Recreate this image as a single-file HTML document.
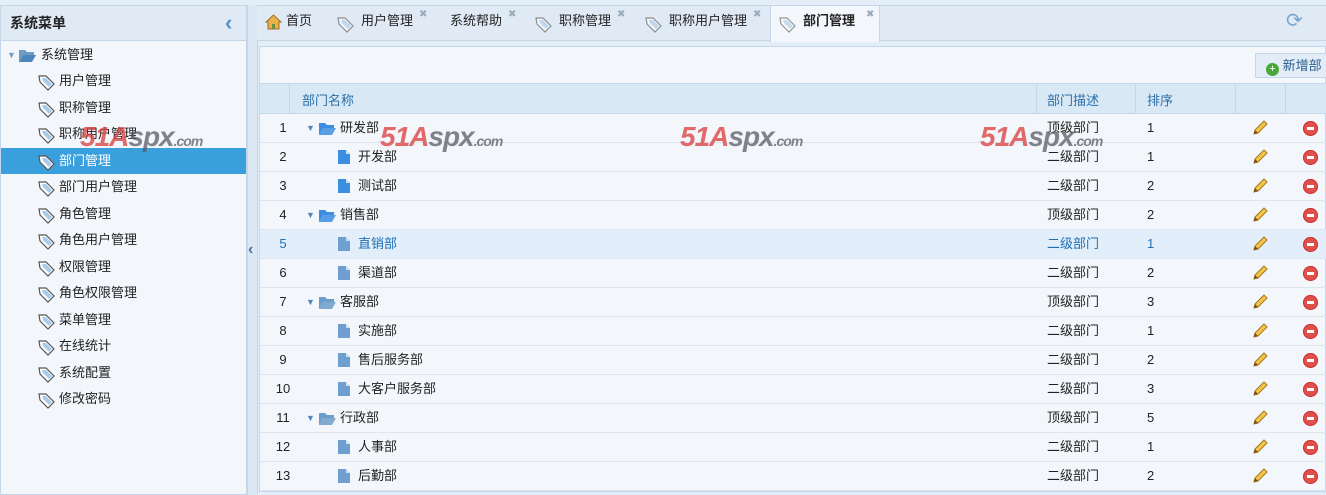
<!DOCTYPE html>
<html><head><meta charset="utf-8"><style>
*{margin:0;padding:0;box-sizing:border-box}
body{width:1326px;height:495px;overflow:hidden;background:#e4eef8;font-family:"Liberation Sans","Noto Sans CJK SC",sans-serif;font-size:13px;color:#222;position:relative}
.abs{position:absolute}
#left{left:0;top:5px;width:247px;height:490px;background:#f3f6fa;border:1px solid #c5d6e8}
#lh{height:35px;background:#dfeaf5;border-bottom:1px solid #c5d6e8;font-weight:bold;font-size:14px;padding:7px 9px}
.mi{position:absolute;left:0;width:245px;height:26px;line-height:26px;padding-left:58px}
.mi.sel{background:#3aa0dd;color:#fff}
.tag{position:absolute;left:37px;top:6px}
#split{left:247px;top:5px;width:11px;height:490px;background:#dbe7f3;border-left:1px solid #c5d6e8;border-right:1px solid #c5d6e8}
#tabs{left:257px;top:5px;width:1069px;height:36px;background:#dfeaf5;border-top:1px solid #c5d6e8;border-bottom:1px solid #c5d6e8}
.tab{position:absolute;top:0;height:35px;line-height:30px;font-size:13px}
.x{position:absolute;top:-6px;font-size:10px;color:#9ab}
#tact{background:#f3f6fa;border-left:1px solid #c5d6e8;border-right:1px solid #c5d6e8;height:36px;font-weight:bold}
#content{left:259px;top:46px;width:1067px;height:446px;background:#f3f6fa;border:1px solid #c5d6e8}
#gh{left:260px;top:83px;width:1066px;height:31px;background:#d9e8f5;border-top:1px solid #c5d6e8;border-bottom:1px solid #c5d6e8;color:#2a6fa8}
.row{position:absolute;left:260px;width:1066px;height:29px;border-bottom:1px solid #dde5ee;line-height:28px}
.row.hl{background:#e2eef9;color:#1f6fb5}
.c{position:absolute;top:0}
.wm{position:absolute;font:italic bold 28px "Liberation Sans",sans-serif;color:rgba(220,70,70,.8);letter-spacing:-1px}
.wm span{color:rgba(90,90,100,.75)}
.wm small{font-size:14px;color:rgba(90,90,100,.75)}
</style></head><body>
<div id="left" class="abs">
<div id="lh">系统菜单<span style="position:absolute;left:224px;top:4px;color:#5b8fc7;font-size:22px;font-weight:bold">&lsaquo;</span></div>
<div class="mi" style="top:36px;padding-left:40px"><span style="position:absolute;left:6px;color:#7a9fc4;font-size:9px">▼</span><svg style="position:absolute;left:18px;top:7px" width="17" height="13"><path d="M0 1h6l2 2h7v3H4L0 13z" fill="#6c9cc8"/><path d="M4 6h13l-4 7H0z" fill="#4b86bd"/></svg>系统管理</div>
<div id="mitems"></div>
</div>
<div id="split" class="abs"><span style="position:absolute;left:0;top:236px;color:#4a6f99;font-weight:bold;font-size:16px">&lsaquo;</span></div>
<div id="tabs" class="abs">
<div class="tab" style="left:8px"><svg style="position:absolute;top:8px" width="17" height="16"><path d="M8.5 1L1 8h2v7h11V8h2z" fill="#e7b24a" stroke="#a56a1f"/><rect x="7" y="10" width="3" height="5" fill="#6b8f3a"/></svg><span style="padding-left:21px">首页</span></div>
<div class="tab" style="left:80px"><span style="padding-left:24px">用户管理</span><span class="x" style="left:82px">✖</span></div>
<div class="tab" style="left:193px">系统帮助<span class="x" style="left:58px">✖</span></div>
<div class="tab" style="left:278px"><span style="padding-left:24px">职称管理</span><span class="x" style="left:82px">✖</span></div>
<div class="tab" style="left:388px"><span style="padding-left:24px">职称用户管理</span><span class="x" style="left:108px">✖</span></div>
<div class="tab" id="tact" style="left:513px;width:110px;padding-left:32px">部门管理<span class="x" style="left:95px;font-weight:normal">✖</span></div>
<span style="position:absolute;left:1026px;top:2px;color:#7aa7cf;font-size:20px">⟳</span>
</div>
<div id="content" class="abs">
<div style="position:absolute;left:995px;top:6px;width:75px;height:25px;border:1px solid #c5d6e8;background:#e3edf7;line-height:23px;padding-left:10px;color:#2a5f8f"><span style="display:inline-block;width:13px;height:13px;border-radius:50%;background:#4aa83a;color:#fff;font-size:11px;line-height:13px;text-align:center;vertical-align:-2px">+</span> 新增部</div>
</div>
<div id="gh" class="abs">
<span class="c" style="left:0;width:30px;height:30px;border-right:1px solid #c5d6e8"></span>
<span class="c" style="left:42px;top:6px">部门名称</span>
<span class="c" style="left:776px;height:30px;border-left:1px solid #c5d6e8;padding:6px 10px">部门描述</span>
<span class="c" style="left:875px;height:30px;border-left:1px solid #c5d6e8;padding:6px 11px">排序</span>
<span class="c" style="left:975px;height:30px;border-left:1px solid #c5d6e8"></span>
<span class="c" style="left:1025px;height:30px;border-left:1px solid #c5d6e8"></span>
</div>
<div id="rows"></div>
<div class="wm" style="left:80px;top:121px">51A<span>spx</span><small>.com</small></div>
<div class="wm" style="left:380px;top:121px">51A<span>spx</span><small>.com</small></div>
<div class="wm" style="left:680px;top:121px">51A<span>spx</span><small>.com</small></div>
<div class="wm" style="left:980px;top:121px">51A<span>spx</span><small>.com</small></div>
<script>
var tagsvg='<svg width="18" height="16" viewBox="0 0 18 16"><path d="M1 2h7l8 8-6 6-8-8z" fill="#fff" stroke="#555" stroke-width="1.2" transform="translate(0,-1)"/><path d="M4 4h4l6 6-3 3-6-6z" fill="#a9cbe8" transform="translate(0,-1)"/></svg>';
var m=["用户管理","职称管理","职称用户管理","部门管理","部门用户管理","角色管理","角色用户管理","权限管理","角色权限管理","菜单管理","在线统计","系统配置","修改密码"],h="";
m.forEach(function(t,i){h+='<div class="mi'+(i==3?' sel':'')+'" style="top:'+(62+i*26.5)+'px"><span class="tag">'+tagsvg+'</span>'+t+'</div>'});
document.getElementById("mitems").innerHTML=h;
document.querySelectorAll(".tab").forEach(function(t,i){if(i==1||i==3||i==4)t.insertAdjacentHTML("afterbegin",'<span style="position:absolute;left:0;top:8px;opacity:.6">'+tagsvg+'</span>')});
document.getElementById("tact").insertAdjacentHTML("afterbegin",'<span style="position:absolute;left:8px;top:8px;opacity:.6">'+tagsvg+'</span>');
var R=[[1,"研发部","顶级部门",1,0],[2,"开发部","二级部门",1,1],[3,"测试部","二级部门",2,1],[4,"销售部","顶级部门",2,0],[5,"直销部","二级部门",1,1],[6,"渠道部","二级部门",2,1],[7,"客服部","顶级部门",3,0],[8,"实施部","二级部门",1,1],[9,"售后服务部","二级部门",2,1],[10,"大客户服务部","二级部门",3,1],[11,"行政部","顶级部门",5,0],[12,"人事部","二级部门",1,1],[13,"后勤部","二级部门",2,1]];
var o="";
R.forEach(function(r,i){var blue=(i<4);var fc=blue?"#3b8ee0":"#6f9fd0";var fo=blue?"#3b8ee0":"#6c9cc8";
var icon=r[4]?'<svg class="c" style="left:78px;top:7px" width="12" height="14"><path d="M0 0h8l4 4v10H0z" fill="'+fc+'"/><path d="M8 0v4h4" fill="#cfe2f4"/></svg><span class="c" style="left:98px">'+r[1]+'</span>'
:'<span class="c" style="left:46px;font-size:9px;color:#4f88c3">▼</span><svg class="c" style="left:59px;top:8px" width="17" height="13"><path d="M0 1h6l2 2h7v3H4L0 13z" fill="'+fo+'"/><path d="M4 6h13l-4 7H0z" fill="'+fo+'" opacity=".85"/></svg><span class="c" style="left:80px">'+r[1]+'</span>';
o+='<div class="row'+(i==4?' hl':'')+'" style="top:'+(114+i*29)+'px"><span class="c" style="left:8px;width:30px;text-align:center">'+r[0]+'</span>'+icon+'<span class="c" style="left:787px">'+r[2]+'</span><span class="c" style="left:887px">'+r[3]+'</span><svg class="c" style="left:992px;top:6px" width="16" height="16"><path d="M2 14l1-4 9-9 3 3-9 9z" fill="#f2c64a" stroke="#a7771c"/><path d="M2 14l1-4 3 3z" fill="#7a4a1a"/></svg><span class="c" style="left:1043px;top:7px;width:15px;height:15px;border-radius:50%;background:#e0504a;box-shadow:inset 0 0 0 1px #c33"></span><span class="c" style="left:1047px;top:13px;width:7px;height:3px;background:#fff"></span></div>'});
document.getElementById("rows").innerHTML=o;
document.querySelector("#tabs > span").style.left="1029px";
</script>
</body></html>
